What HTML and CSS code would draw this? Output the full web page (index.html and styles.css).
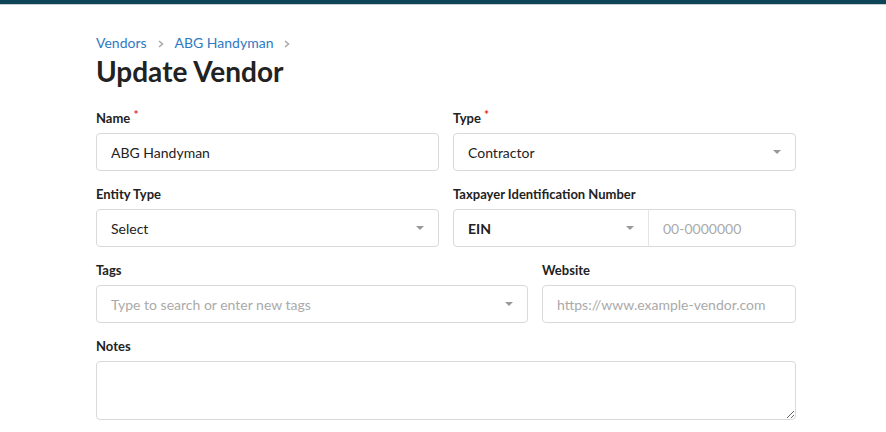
FILE: index.html
```html
<!DOCTYPE html>
<html lang="en">
<head>
    <meta charset="UTF-8">
    <meta name="viewport" content="width=device-width, initial-scale=1.0">
    <title>Update Vendor</title>
    <link rel="stylesheet" href="styles.css">
</head>
<body>

<div class="topbar"></div>

<div class="page">
    <nav class="crumbs">
        <a href="#">Vendors</a>
        <svg class="sep" width="6" height="8" viewBox="0 0 6 8"><polyline points="1,1 4.5,4 1,7" fill="none" stroke="#aaa" stroke-width="1.6"/></svg>
        <a href="#">ABG Handyman</a>
        <svg class="sep" width="6" height="8" viewBox="0 0 6 8"><polyline points="1,1 4.5,4 1,7" fill="none" stroke="#aaa" stroke-width="1.6"/></svg>
    </nav>
    <h1>Update Vendor</h1>

    <form class="vendor-form">
        <div class="row">
            <div class="field half">
                <label>Name <span class="req">*</span></label>
                <input type="text" value="ABG Handyman">
            </div>
            <div class="field half">
                <label>Type <span class="req">*</span></label>
                <div class="select">Contractor<span class="caret"></span></div>
            </div>
        </div>

        <div class="row">
            <div class="field half">
                <label>Entity Type</label>
                <div class="select">Select<span class="caret"></span></div>
            </div>
            <div class="field half">
                <label>Taxpayer Identification Number</label>
                <div class="tin">
                    <div class="select tin-type">EIN<span class="caret"></span></div>
                    <input type="text" class="tin-number" placeholder="00-0000000">
                </div>
            </div>
        </div>

        <div class="row">
            <div class="field tags">
                <label>Tags</label>
                <div class="select placeholder">Type to search or enter new tags<span class="caret"></span></div>
            </div>
            <div class="field website">
                <label>Website</label>
                <input type="text" placeholder="https://www.example-vendor.com">
            </div>
        </div>

        <div class="row">
            <div class="field full">
                <label>Notes</label>
                <textarea></textarea>
            </div>
        </div>
    </form>
</div>

</body>
</html>
```

FILE: styles.css
```css
body {
    margin: 0;
    font-family: 'Lato', 'Liberation Sans', sans-serif;
    color: #222;
    background: #fff;
}
.topbar {
    height: 4px;
    background: #0e4458;
    border-bottom: 1px solid #c8cdd0;
}
.page {
    width: 700px;
    margin-left: 96px;
    padding-top: 29px;
}
.crumbs {
    font-size: 14px;
    line-height: 18px;
    display: flex;
    align-items: center;
    gap: 11px;
}
.crumbs a {
    color: #2f79c2;
    text-decoration: none;
}
.crumbs .sep {
    margin-top: 1px;
}
h1 {
    margin: 2px 0 0;
    font-size: 28px;
    line-height: 34px;
    font-weight: 700;
    color: #222;
}
.vendor-form {
    margin-top: 19px;
}
.row {
    display: flex;
    gap: 14px;
    margin-bottom: 15px;
}
.field {
    display: flex;
    flex-direction: column;
}
.field.half { width: 343px; }
.field.tags { width: 432px; }
.field.website { width: 254px; }
.field.full { width: 700px; }
.field label {
    font-size: 13px;
    line-height: 16px;
    font-weight: 700;
    margin-bottom: 7px;
}
.req {
    color: #d9322b;
    font-size: 12px;
    vertical-align: 4px;
}
.field input, .select, textarea {
    box-sizing: border-box;
    height: 38px;
    border: 1px solid #d9d9d9;
    border-radius: 4px;
    padding: 0 14px;
    font-family: inherit;
    font-size: 14px;
    color: #222;
    background: #fff;
    outline: none;
}
.field input::placeholder {
    color: #aaa;
}
.select {
    display: flex;
    align-items: center;
    justify-content: space-between;
}
.select.placeholder {
    color: #aaa;
}
.caret {
    width: 0;
    height: 0;
    border-left: 4px solid transparent;
    border-right: 4px solid transparent;
    border-top: 4px solid #999;
}
.tin {
    display: flex;
}
.tin-type {
    width: 196px;
    border-radius: 4px 0 0 4px;
    font-weight: 700;
}
.field .tin-number {
    flex: 1;
    width: 0;
    border-radius: 0 4px 4px 0;
    border-left: 1px solid #e4e4e4;
    margin-left: -1px;
}
textarea {
    height: 59px;
    resize: vertical;
}
```
